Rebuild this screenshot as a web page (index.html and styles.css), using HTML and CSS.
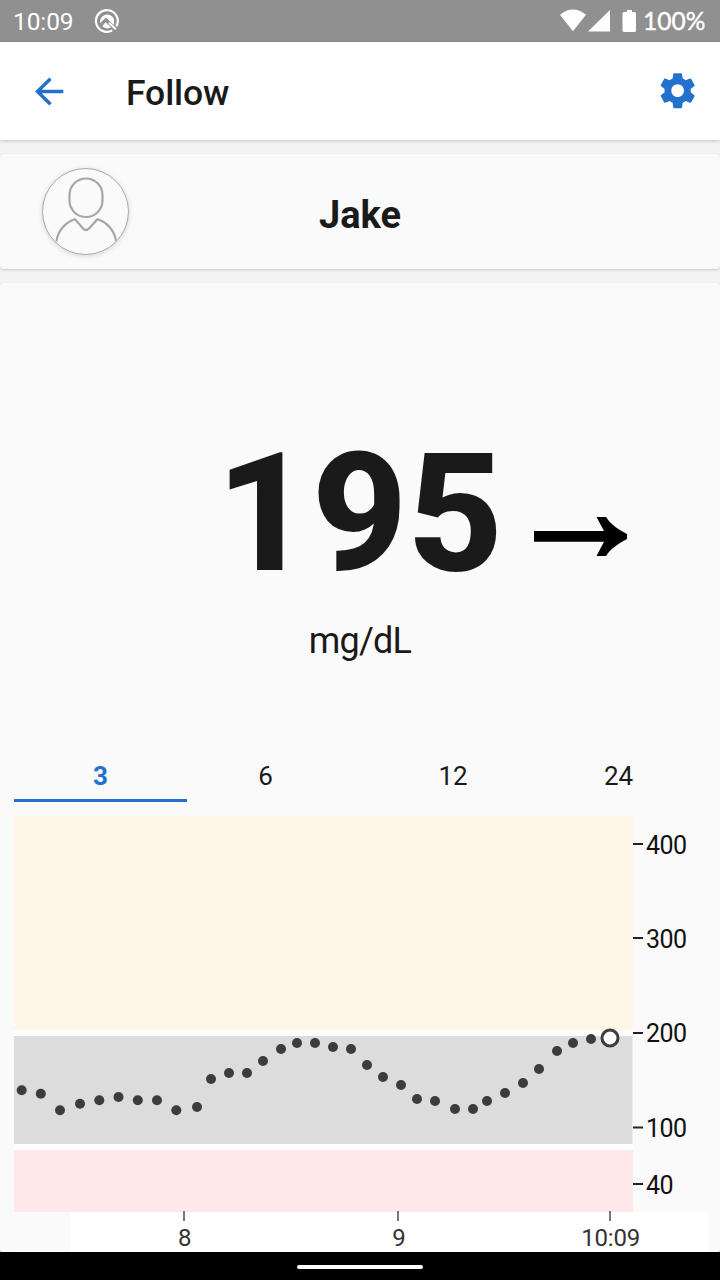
FILE: index.html
```html
<!DOCTYPE html>
<html lang="en">
<head>
<meta charset="utf-8">
<title>Follow</title>
<link rel="stylesheet" href="styles.css">
</head>
<body>
<div class="screen">
  <div class="status">
    <span class="clock">10:09</span>
    <svg class="status-logo" width="26" height="26" viewBox="0 0 26 26">
      <path d="M18.300 22.400A10.900 10.900 0 1 1 22.300 18.400" fill="none" stroke="#fff" stroke-width="2.200"/>
      <path d="M6.200 15.300A7.300 7.300 0 0 1 19.700 10.200Q20.700 14 19.800 17L12.800 10.300Q11.800 9.400 10.800 10.400Z" fill="#fff"/>
      <path d="M11.500 14.200L17.200 19.300Q12.500 22 8.300 18.300Z" fill="#fff"/>
      <path d="M15 14.800L21.800 21.200" stroke="#fff" stroke-width="2"/>
    </svg>
    <svg class="status-icons" width="78" height="26" viewBox="559 8 78 26">
      <path d="M560 14.800Q573 4 586 14.800L573 31.200Z" fill="#fff"/>
      <path d="M588 31.600L610 10V31.600Z" fill="#fff"/>
      <path d="M627 10h5v2h2.500q1.500 0 1.500 1.500v17q0 1.500-1.500 1.500h-10.500q-1.500 0-1.500-1.500v-17q0-1.500 1.500-1.500h3z" fill="#fff"/>
    </svg>
    <span class="percent">100%</span>
  </div>
  <header class="appbar">
    <svg class="back" width="30" height="30" viewBox="0 0 30 30" fill="none" stroke="#2271cd" stroke-width="3.400">
      <path d="M29.300 15.500H3.500M16.500 2.800L3.500 15.500L16.500 28.200"/>
    </svg>
    <h1 class="title">Follow</h1>
    <svg class="gear" width="42" height="42" viewBox="0.200 0.200 24 24" fill="#2271cd">
      <path d="M19.430 12.980c.040-.320.070-.640.070-.980s-.030-.660-.070-.980l2.110-1.650c.190-.150.240-.420.120-.640l-2-3.460c-.120-.220-.390-.300-.610-.220l-2.490 1c-.520-.400-1.080-.730-1.690-.980l-.380-2.650C14.460 2.180 14.250 2 14 2h-4c-.250 0-.460.180-.490.420l-.380 2.650c-.610.250-1.170.590-1.690.980l-2.490-1c-.230-.090-.490 0-.610.220l-2 3.460c-.130.220-.070.490.120.640l2.110 1.650c-.040.320-.070.650-.070.980s.030.660.070.980l-2.110 1.650c-.190.150-.240.420-.120.640l2 3.460c.120.220.390.300.610.220l2.490-1c.520.400 1.080.730 1.690.980l.380 2.650c.030.240.240.420.490.420h4c.250 0 .460-.180.490-.420l.380-2.650c.610-.250 1.170-.590 1.690-.980l2.490 1c.230.090.490 0 .610-.220l2-3.460c.120-.220.070-.490-.120-.640l-2.110-1.650zM12 15.600c-1.980 0-3.600-1.620-3.600-3.600s1.620-3.600 3.600-3.600 3.600 1.620 3.600 3.600-1.620 3.600-3.600 3.600z"/>
    </svg>
  </header>
  <main class="content">
    <section class="card person">
      <div class="avatar">
        <svg width="86" height="86" viewBox="0 0.500 86 86" fill="none" stroke="#a6a6a6" stroke-width="2.200">
          <rect x="26.500" y="10" width="33" height="38.500" rx="16.500" ry="16.500"/>
          <path d="M13.500 73C14.500 62 23 53.500 32 50.800L40 60Q43 63 46 60L54.500 50.800C63.500 53.500 72 62 73 73"/>
        </svg>
      </div>
      <h2 class="name">Jake</h2>
    </section>
    <section class="card glucose">
      <div class="reading">
        <span class="value">195</span>
        <svg class="trend" width="94" height="42" viewBox="534 515 94 42">
          <path d="M534 531H604L596.500 517H606C612 526 620 530 627 534V539C620 543 612 547 606 556H596.500L604 541.700H534Z" fill="#000"/>
        </svg>
      </div>
      <div class="unit">mg/dL</div>
      <nav class="tabs">
        <span class="tab active">3</span>
        <span class="tab">6</span>
        <span class="tab">12</span>
        <span class="tab">24</span>
      </nav>
      <svg class="chart" width="720" height="436" viewBox="0 816 720 436">
        <rect x="14" y="816" width="619" height="436" fill="#fff"/>
        <rect x="14" y="1212" width="56" height="39" fill="#fafafa"/>
        <rect x="70" y="1212" width="638" height="40" fill="#fff"/>
        <rect x="14" y="816" width="619" height="214" fill="#fff6e9"/>
        <rect x="14" y="1036" width="618.500" height="108" fill="#dcdcdc"/>
        <rect x="14" y="1150" width="619" height="62" fill="#ffe8ea"/>
        <path d="M633 844H643M633 938H643M633 1033H643M633 1127.500H643M633 1184H643" stroke="#222" stroke-width="2"/>
        <path d="M184 1211V1221M398 1211V1221M610 1211V1221" stroke="#777" stroke-width="2"/>
        <g class="y-labels">
          <text x="646" y="853.500">400</text>
          <text x="646" y="947.500">300</text>
          <text x="646" y="1042">200</text>
          <text x="646" y="1137">100</text>
          <text x="646" y="1193.500">40</text>
        </g>
        <g class="x-labels">
          <text x="184.700" y="1246">8</text>
          <text x="399" y="1246">9</text>
          <text x="610.700" y="1246">10:09</text>
        </g>
        <g id="dots" fill="#3c3c3c"></g>
        <circle cx="610" cy="1038" r="8" fill="#fff" stroke="#3c3c3c" stroke-width="3"/>
      </svg>
    </section>
  </main>
  <footer class="navbar"><span class="handle"></span></footer>
</div>
<script src="chart.js"></script>
</body>
</html>
```

FILE: chart.js
```js
const points = [
  [21.7, 1090.3], [40.8, 1093.7], [60, 1110.3], [80, 1103.7], [99.300, 1100.3],
  [118.500, 1097], [137.800, 1100.300], [157, 1100.300], [176.300, 1110.300], [197, 1107],
  [211, 1079], [229, 1073], [247, 1073], [263, 1061], [281, 1049], [297, 1043],
  [315, 1043], [333, 1047], [351, 1049], [367, 1065], [383, 1077], [401, 1085],
  [417, 1099], [435, 1101], [455, 1109], [473, 1109], [487, 1101], [505, 1093],
  [523, 1083], [539, 1069], [557, 1051], [573, 1043], [591, 1039]
];
const group = document.getElementById("dots");
for (const [x, y] of points) {
  const c = document.createElementNS("http://www.w3.org/2000/svg", "circle");
  c.setAttribute("cx", x);
  c.setAttribute("cy", y);
  c.setAttribute("r", 5);
  group.appendChild(c);
}
```

FILE: styles.css
```css
* { box-sizing: border-box; }
body { margin: 0; font-family: Roboto, sans-serif; color: #1a1a1a; }
h1, h2 { margin: 0; }
svg { display: block; flex: none; }
.screen { width: 720px; height: 1280px; display: flex; flex-direction: column; overflow: hidden; background: #f4f4f4; }
.status { height: 42px; flex: none; display: flex; align-items: center; background: #909090; color: #fff; padding: 0 14px 0 13px; }
.clock { width: 81px; font-size: 24.500px; font-weight: 450; line-height: 41px; letter-spacing: -0.100px; }
.status-icons { margin-left: auto; }
.percent { width: 63px; margin-left: 6px; font-family: Lato, sans-serif; font-size: 24.500px; line-height: 42px; -webkit-text-stroke: 0.400px #fff; white-space: nowrap; }
.appbar { height: 98px; flex: none; display: flex; align-items: center; background: #fff; padding: 0 21px 0 34px; box-shadow: 0 1px 4px rgba(0, 0, 0, .2); z-index: 1; }
.title { margin-left: 62px; flex: 1; font-size: 35.500px; font-weight: 500; line-height: 42px; padding-top: 4px; letter-spacing: -0.100px; }
.gear { margin-bottom: 1px; }
.content { flex: 1; min-height: 0; padding-top: 14px; display: flex; flex-direction: column; gap: 14px; }
.card { background: #fafafa; border-radius: 4px; box-shadow: 0 1px 3px rgba(0, 0, 0, .18); }
.person { height: 115px; flex: none; display: grid; grid-template-columns: 1fr auto 1fr; align-items: center; padding: 0 42px; }
.avatar { width: 87px; height: 87px; border: 1.500px solid #a6a6a6; border-radius: 50%; box-shadow: 0 1px 5px rgba(0, 0, 0, .15); overflow: hidden; }
.name { font-size: 38px; font-weight: 700; padding-top: 6px; }
.glucose { flex: 1; display: flex; flex-direction: column; }
.reading { height: 332px; padding: 134px 0 0 216px; display: flex; }
.value { font-size: 166px; line-height: 194px; font-weight: 800; width: 318px; letter-spacing: 0; }
.trend { margin-top: 98px; }
.unit { height: 52px; line-height: 53px; font-size: 36px; text-align: center; letter-spacing: -0.800px; }
.tabs { margin: 82px 14px 14px; display: grid; grid-template-columns: 173px 157px 218px 113px; height: 53px; font-size: 26px; text-align: center; }
.tab { line-height: 54px; height: 53px; }
.tab.active { color: #2271cd; font-weight: 700; border-bottom: 3px solid #2271cd; }
.y-labels { font-size: 25px; fill: #111; letter-spacing: -0.500px; }
.x-labels { font-size: 24px; fill: #333; text-anchor: middle; letter-spacing: -0.200px; }
.navbar { height: 28px; flex: none; background: #000; display: flex; justify-content: center; padding: 13px 1px 0 0; z-index: 1; }
.handle { width: 126px; height: 4px; border-radius: 2px; background: #fff; }
```
